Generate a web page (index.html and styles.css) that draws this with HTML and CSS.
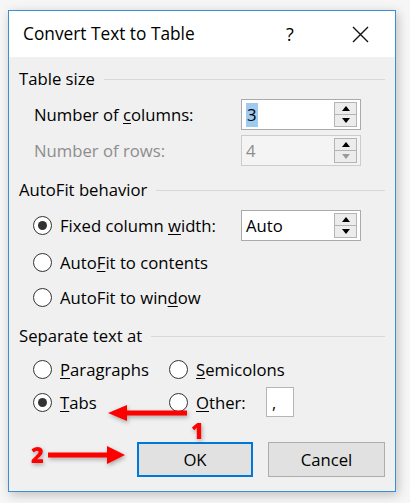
FILE: index.html
```html
<!DOCTYPE html>
<html>
<head>
<meta charset="utf-8">
<link rel="stylesheet" href="styles.css">
</head>
<body>
<div class="screen">
  <div class="dialog">
    <div class="titlebar">
      <span class="title">Convert Text to Table</span>
      <span class="help">?</span>
      <span class="close"><svg width="17" height="17" viewBox="0 0 17 17"><path d="M1 1L16 16M16 1L1 16" stroke="#111" stroke-width="1.4" fill="none"/></svg></span>
    </div>
    <div class="body">
      <div class="group-head h1"><span>Table size</span><span class="rule"></span></div>
      <div class="row r-cols">
        <span class="lbl">Number of <u>c</u>olumns:</span>
        <div class="spin">
          <div class="val"><span class="sel">3</span></div>
          <div class="btns"><div class="b"><i class="up"></i></div><div class="b"><i class="down"></i></div></div>
        </div>
      </div>
      <div class="row r-rows">
        <span class="lbl dis">Number of rows:</span>
        <div class="spin off">
          <div class="val">4</div>
          <div class="btns"><div class="b"><i class="up"></i></div><div class="b"><i class="down gray"></i></div></div>
        </div>
      </div>

      <div class="group-head h2"><span>AutoFit behavior</span><span class="rule"></span></div>
      <div class="row r-fixed rad">
        <span class="radio on"><span class="dot"></span></span>
        <span class="rlbl wide">Fixed column <u>w</u>idth:</span>
        <div class="spin">
          <div class="val">Auto</div>
          <div class="btns"><div class="b"><i class="up"></i></div><div class="b"><i class="down"></i></div></div>
        </div>
      </div>
      <div class="row r-contents rad">
        <span class="radio"></span>
        <span class="rlbl">Auto<u>F</u>it to contents</span>
      </div>
      <div class="row r-window rad">
        <span class="radio"></span>
        <span class="rlbl">AutoFit to win<u>d</u>ow</span>
      </div>

      <div class="group-head h3"><span>Separate text at</span><span class="rule"></span></div>
      <div class="sepgrid">
        <div class="cell"><span class="radio"></span><span class="rlbl"><u>P</u>aragraphs</span></div>
        <div class="cell"><span class="radio"></span><span class="rlbl"><u>S</u>emicolons</span></div>
        <div class="cell"><span class="radio on"><span class="dot"></span></span><span class="rlbl"><u>T</u>abs</span></div>
        <div class="cell"><span class="radio"></span><span class="rlbl other"><u>O</u>ther:</span><span class="otherbox">,</span></div>
      </div>

      <div class="buttons">
        <button class="btn ok">OK</button>
        <button class="btn">Cancel</button>
      </div>
    </div>
  </div>

  <svg class="annot" width="410" height="503" viewBox="0 0 410 503">
    <g class="arrows">
      <polygon points="108,413 127,405 127,410.5 187,410.5 187,415.5 127,415.5 127,421" fill="#ff0000"/>
      <polygon points="48,452.5 107,452.5 107,446 125,455 107,464 107,457.5 48,457.5" fill="#ff0000"/>
      <text x="191" y="439" class="num">1</text>
      <text x="31" y="463" class="num">2</text>
    </g>
  </svg>
</div>
</body>
</html>
```

FILE: styles.css
```css
html, body {
  margin: 0;
  padding: 0;
}

body {
  background: #f5f5f5;
  font-family: "Open Sans", "Noto Sans", sans-serif;
  color: #000;
}

.screen {
  position: relative;
  width: 410px;
  height: 503px;
  overflow: hidden;
  box-sizing: border-box;
  padding: 10px 0 0 8px;
  background: #f6f6f6;
}

.dialog {
  width: 388px;
  height: 482px;
  box-sizing: border-box;
  border: 1px solid #3d8ed6;
  background: #f0f0f0;
  box-shadow: 2px 3px 10px rgba(0, 0, 0, 0.22);
  display: flex;
  flex-direction: column;
}

.titlebar {
  height: 46px;
  background: #fff;
  display: flex;
  align-items: center;
  flex-shrink: 0;
}

.title {
  font-size: 17.3px;
  padding-left: 14px;
  flex: 1;
  line-height: 24px;
}

.help {
  width: 46px;
  text-align: center;
  font-size: 18px;
  line-height: 24px;
}

.close {
  width: 46px;
  margin-left: 24px;
  margin-right: 12px;
  display: flex;
  justify-content: center;
  align-items: center;
}

.body {
  padding: 0 10px;
  font-size: 16.7px;
  flex: 1;
}

u {
  text-decoration-thickness: 1px;
  text-underline-offset: 2px;
}

.group-head {
  height: 22px;
  display: flex;
  align-items: center;
  line-height: 22px;
}

.group-head .rule {
  flex: 1;
  height: 1px;
  background: #d8d8d8;
  margin-left: 9px;
}

.h1 { margin-top: 11px; }
.h2 { margin-top: 13px; }
.h3 { margin-top: 13px; }

.row {
  display: flex;
  align-items: center;
  height: 31px;
  padding-left: 15px;
}

.row.rad {
  padding-left: 14px;
  height: 30px;
}

.r-cols { margin-top: 9px; }
.r-rows { margin-top: 5px; }
.r-fixed { margin-top: 9px; height: 31px !important; }
.r-contents { margin-top: 6px; }
.r-window { margin-top: 5px; }

.lbl {
  width: 207px;
}

.dis {
  color: #8d8d8d;
}

.spin {
  width: 120px;
  height: 31px;
  box-sizing: border-box;
  border: 1px solid #aaaaaa;
  background: #fff;
  display: flex;
}

.spin.off {
  border-color: #cccccc;
  background: #f4f4f4;
  color: #8d8d8d;
}

.spin .val {
  flex: 1;
  display: flex;
  align-items: center;
  padding-left: 4px;
}

.sel {
  background: #9fcbf0;
  padding: 1px 1px;
  line-height: 22px;
}

.btns {
  width: 23px;
  margin: 2px 3px 2px 0;
  display: flex;
  flex-direction: column;
}

.btns .b {
  flex: 1;
  box-sizing: border-box;
  border: 1px solid #b4b4b4;
  background: #ececec;
  display: flex;
  align-items: center;
  justify-content: center;
}

.btns .b + .b {
  border-top: none;
}

.up {
  width: 0;
  height: 0;
  border-left: 4.5px solid transparent;
  border-right: 4.5px solid transparent;
  border-bottom: 5px solid #000;
}

.down {
  width: 0;
  height: 0;
  border-left: 4.5px solid transparent;
  border-right: 4.5px solid transparent;
  border-top: 5px solid #000;
}

.down.gray {
  border-top-color: #9a9a9a;
}

.radio {
  width: 19px;
  height: 19px;
  box-sizing: border-box;
  border: 1.5px solid #333;
  border-radius: 50%;
  background: #fff;
  display: inline-flex;
  align-items: center;
  justify-content: center;
  flex-shrink: 0;
}

.radio .dot {
  width: 9px;
  height: 9px;
  border-radius: 50%;
  background: #333;
}

.rlbl {
  margin-left: 8px;
}

.rlbl.wide {
  width: 181px;
}

.sepgrid {
  margin-top: 7px;
  padding-left: 14px;
  display: grid;
  grid-template-columns: 136px 1fr;
  grid-template-rows: 30px 30px;
  row-gap: 3px;
}

.cell {
  display: flex;
  align-items: center;
}

.rlbl.other {
  width: 70px;
}

.otherbox {
  width: 28px;
  height: 30px;
  box-sizing: border-box;
  border: 1px solid #b5b5b5;
  background: #fff;
  padding-left: 5px;
  line-height: 30px;
  font-size: 16px;
}

.buttons {
  margin-top: 25px;
  display: flex;
  justify-content: flex-end;
  gap: 15px;
}

.btn {
  width: 117px;
  height: 35px;
  box-sizing: border-box;
  border: 1px solid #adadad;
  background: #e1e1e1;
  font-family: "Open Sans", "Noto Sans", sans-serif;
  font-size: 16.7px;
  color: #000;
  padding: 0;
}

.btn.ok {
  width: 116px;
  border: 2px solid #0078d7;
}

.annot {
  position: absolute;
  left: 0;
  top: 0;
  pointer-events: none;
}

.arrows {
  filter: drop-shadow(1px 2px 2px rgba(0, 0, 0, 0.3));
}

.num {
  font-family: "Open Sans", sans-serif;
  font-weight: 800;
  font-size: 22px;
  fill: #ff0000;
}
```
